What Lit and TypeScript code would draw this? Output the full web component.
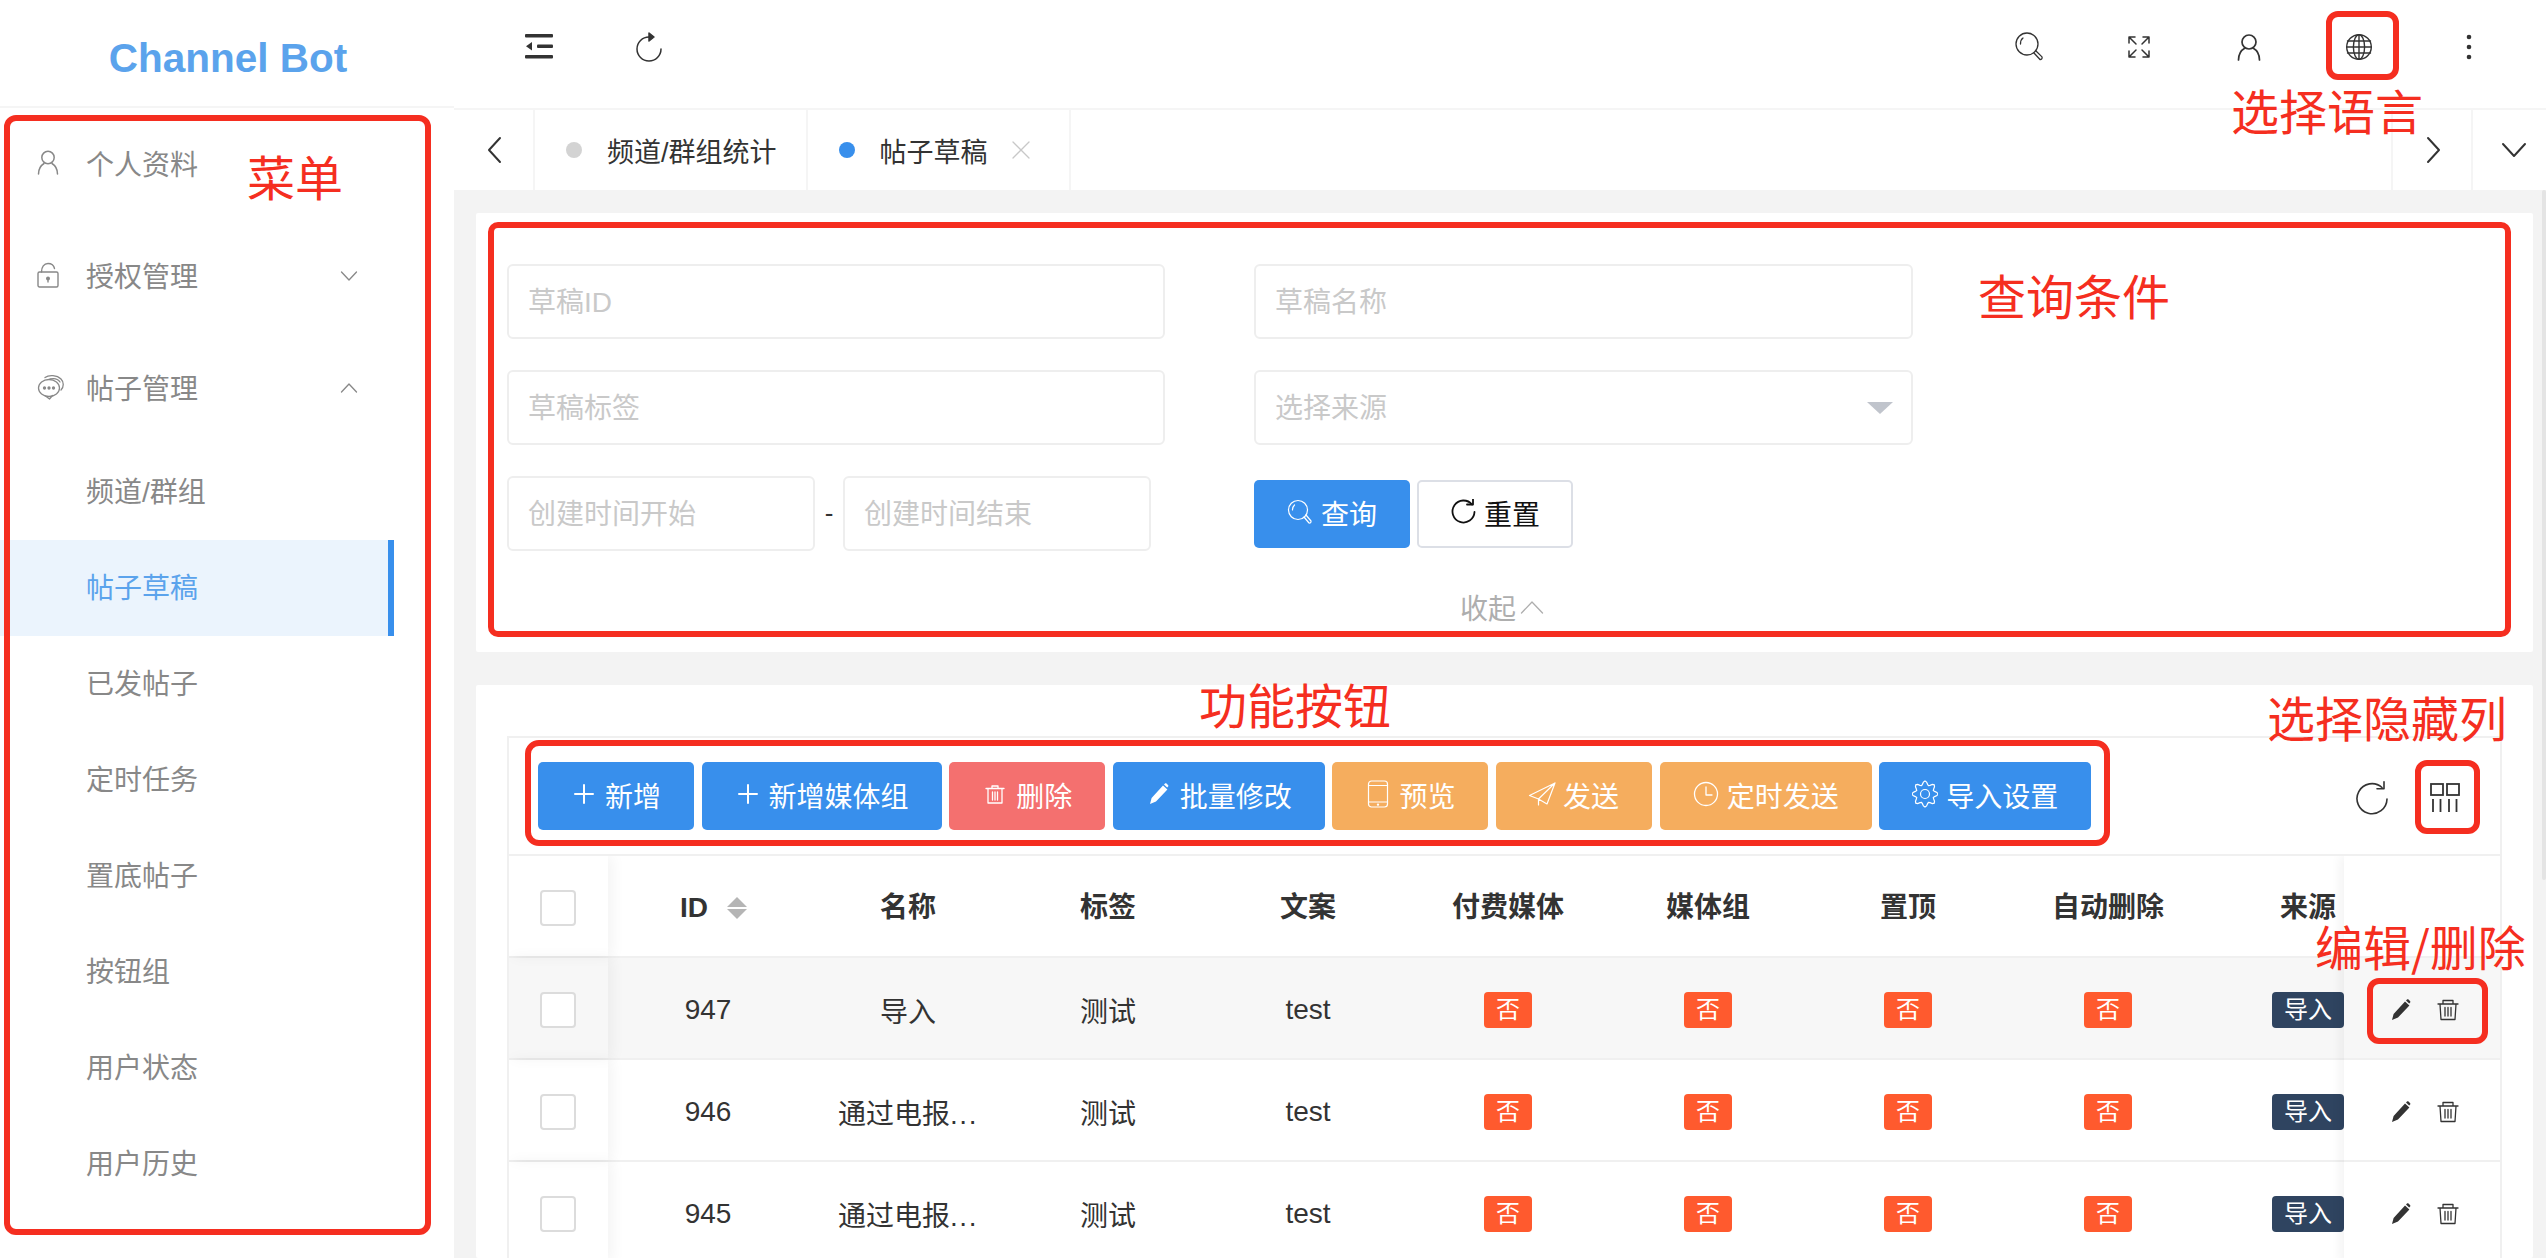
import { LitElement, html, svg, css } from "lit";
import { customElement } from "lit/decorators.js";
import { classMap } from "lit/directives/class-map.js";

// line icons, all drawn with currentColor
const line = (w: number, h: number, body: unknown, sw = 1.6) => html`<svg
  width=${w} height=${h} viewBox="0 0 ${w} ${h}" fill="none" stroke="currentColor"
  stroke-width=${sw} stroke-linecap="round" stroke-linejoin="round">${body}</svg>`;

const gearPath = () => {
  const pts: string[] = [];
  for (let i = 0; i < 48; i++) {
    const a = (i / 48) * Math.PI * 2;
    const r = 11 + 2 * Math.cos(a * 8);
    pts.push(`${(13 + r * Math.cos(a)).toFixed(2)} ${(14 + r * Math.sin(a)).toFixed(2)}`);
  }
  return `M${pts.join("L")}Z`;
};

const icons = {
  indent: html`<svg width="28" height="26" viewBox="0 0 28 26" fill="currentColor">
    <rect width="28" height="3.6" rx="1" /><rect x="12" y="10.5" width="16" height="3.6" rx="1" />
    <polygon points="1,12.3 7,8 7,16.6" /><rect y="21" width="28" height="3.6" rx="1" /></svg>`,
  reload: line(28, 30, svg`<path d="M26 17A12 12 0 1 1 14 5" /><path d="M14 1l5 4-5 4z" fill="currentColor" />`, 1.5),
  search: line(30, 30, svg`<circle cx="13" cy="12" r="11" /><path d="M6.5 12c0-3 1-5 2.5-6" />
    <path d="M20 21l6 6.5a1.9 1.9 0 0 0 2-2.6L22 19" />`, 1.3),
  full: line(24, 24, svg`<path d="M2 8V2h6M2 2l7 7M22 8V2h-6M22 2l-7 7M2 16v6h6M2 22l7-7M22 16v6h-6M22 22l-7-7" />`, 1.5),
  user: line(24, 27, svg`<circle cx="12" cy="8" r="7" /><path d="M1.5 26c0-6 3-10 6.5-12M22.5 26c0-6-3-10-6.5-12" />`, 1.7),
  globe: line(28, 28, svg`<circle cx="14" cy="14" r="12.3" /><ellipse cx="14" cy="14" rx="5.6" ry="12.3" />
    <path d="M14 1.7v24.6M2.5 8h23M1.7 14h24.6M2.5 20h23" />`, 1.4),
  back: line(16, 28, svg`<path d="M14 2L3 14l11 12" />`, 2),
  forward: line(16, 28, svg`<path d="M2 2l11 12L2 26" />`, 2),
  down: line(26, 16, svg`<path d="M2 2l11 12L24 2" />`, 2),
  close: line(18, 18, svg`<path d="M1 1l16 16M17 1L1 17" />`, 1.3),
  menuUser: line(22, 25, svg`<circle cx="11" cy="7.5" r="6.2" /><path d="M1.5 24c0-5 2.5-8.6 5.5-10.5M20.5 24c0-5-2.5-8.6-5.5-10.5" />`, 1.5),
  lock: line(22, 26, svg`<rect x="1" y="10" width="20" height="15" rx="1.5" /><path d="M4.5 10C4.5 5 7 1.5 11 1.5s6 2.5 6.5 5" />
    <circle cx="11" cy="16.5" r="1.3" fill="currentColor" /><path d="M11 17v3" />`, 1.4),
  chat: line(28, 26, svg`<ellipse cx="12" cy="14" rx="10.5" ry="8.5" /><path d="M8.5 22l4 3 3-3.5" />
    <path d="M8 3.5C12 .5 20 1 24 5c3 3 3 8 0 11M13 5c4-1 8 0 10 3" />
    <circle cx="7.5" cy="14" r="1" fill="currentColor" /><circle cx="12" cy="14" r="1" fill="currentColor" /><circle cx="16.5" cy="14" r="1" fill="currentColor" />`, 1.3),
  chevDown: line(18, 12, svg`<path d="M1.5 2L9 10l7.5-8" />`, 1.3),
  chevUp: line(18, 12, svg`<path d="M1.5 10L9 2l7.5 8" />`, 1.3),
  collapseUp: line(24, 14, svg`<path d="M1.5 13L12 2l10.5 11" />`, 1.3),
  plus: line(20, 20, svg`<path d="M10 1v18M1 10h18" />`, 2),
  trash: line(20, 20, svg`<path d="M1 4.5h18M7 4.5V2h6v2.5M3 4.5V19h14V4.5M7.5 8v8M10 8v8M12.5 8v8" />`, 1.3),
  pen: html`<svg width="20" height="22" viewBox="0 0 20 22" fill="currentColor"><path d="M1 21l1.6-6L14 2.5l4.4 4L7 18.5zM15 1.4l1-.8c.6-.4 1.2-.3 1.7.1l1.3 1.2c.5.5.5 1.2.1 1.7l-.9 1z" /></svg>`,
  phone: line(22, 28, svg`<rect x="1.5" y="1" width="19" height="26" rx="3" /><path d="M1.5 5.5h19M1.5 22h19" /><circle cx="11" cy="24.6" r=".6" />`, 1.2),
  send: line(28, 24, svg`<path d="M27 1L1.5 13.5l9 3.5L27 1l-8 21-8.5-5V23" />`, 1.2),
  clock: line(26, 26, svg`<circle cx="13" cy="13" r="11.5" /><path d="M13 6v8h6" />`, 1.3),
  gear: html`<svg width="26" height="28" viewBox="0 0 26 28" fill="none" stroke="currentColor" stroke-width="1.2">
    <path d=${gearPath()} /><circle cx="13" cy="14" r="4.5" /></svg>`,
  glass: line(26, 26, svg`<circle cx="11" cy="11" r="9.5" /><path d="M5.5 11c0-2.5.8-4 2-5" /><path d="M17 18l5 6a1.6 1.6 0 0 0 2-2l-5-6" />`, 1.2),
  reset: line(26, 26, svg`<path d="M22 5.5A11 11 0 1 0 24.5 13" /><path d="M17 5.5h6V0" />`, 1.8),
  tableReload: line(34, 34, svg`<path d="M32 18A15 15 0 1 1 27 6.5" /><path d="M29 .8v7h-7" />`, 1.6),
  columns: html`<svg width="30" height="30" viewBox="0 0 30 30" fill="none" stroke="currentColor" stroke-width="1.8">
    <rect x="1" y="1" width="12" height="11" /><rect x="17" y="1" width="12" height="11" />
    <path d="M3 16v13M10.5 16v13M19 16v13M26.5 16v13" /></svg>`,
  rowTrash: line(22, 22, svg`<path d="M1 5h20M6 5V1.5h10V5M3 5l1 15.5h14L19 5M8 8.5V17M11 8.5V17M14 8.5V17" />`, 1.3),
};

const menuSub = ["频道/群组", "帖子草稿", "已发帖子", "定时任务", "置底帖子", "按钮组", "用户状态", "用户历史"];

const toolButtons = [
  { label: "新增", icon: icons.plus, kind: "blue" },
  { label: "新增媒体组", icon: icons.plus, kind: "blue" },
  { label: "删除", icon: icons.trash, kind: "red" },
  { label: "批量修改", icon: icons.pen, kind: "blue" },
  { label: "预览", icon: icons.phone, kind: "orange" },
  { label: "发送", icon: icons.send, kind: "orange" },
  { label: "定时发送", icon: icons.clock, kind: "orange" },
  { label: "导入设置", icon: icons.gear, kind: "blue" },
];

const headers = ["名称", "标签", "文案", "付费媒体", "媒体组", "置顶", "自动删除", "来源"];

const rows = [
  { id: 947, name: "导入", cut: false, hover: true },
  { id: 946, name: "通过电报", cut: true, hover: false },
  { id: 945, name: "通过电报", cut: true, hover: false },
];

@customElement("app-root")
export class AppRoot extends LitElement {
  static styles = css`
    :host {
      display: block;
      position: relative;
      width: 2546px;
      height: 1258px;
      overflow: hidden;
      background: #fff;
      color: #333;
      font-family: "Liberation Sans", "Noto Sans CJK SC", sans-serif;
      font-size: 28px;
    }
    * { box-sizing: border-box; }
    svg { display: block; flex: none; }
    .layout { display: flex; height: 100%; }

    /* sidebar */
    .side { width: 454px; flex: none; background: #fff; }
    .logo {
      height: 108px;
      padding: 11px 0 0 2px;
      display: flex;
      align-items: center;
      justify-content: center;
      border-bottom: 2px solid #f5f5f5;
      font-size: 40.5px;
      font-weight: 700;
      color: #5ba3ec;
    }
    .menu { display: flex; flex-direction: column; color: #888; }
    .menu-row { height: 112px; display: flex; align-items: center; padding-left: 37px; padding-bottom: 3px; }
    .menu-icon { width: 49px; display: flex; }
    .chev { margin-left: 142px; padding-top: 3px; }
    .sub {
      height: 96px;
      width: 394px;
      display: flex;
      align-items: center;
      padding: 0 0 5px 86px;
    }
    .sub.active { background: #ebf4fd; color: #5ba3ec; border-right: 6px solid #388fec; }

    /* top */
    .main { flex: 1; min-width: 0; display: flex; flex-direction: column; background: #f3f3f3; }
    .topbar {
      height: 110px;
      flex: none;
      display: flex;
      align-items: flex-start;
      justify-content: space-between;
      padding: 0 22px 0 30px;
      background: #fff;
      border-bottom: 2px solid #f5f5f5;
      color: #333;
    }
    .tb-group { display: flex; }
    .tb-btn { width: 110px; height: 94px; display: flex; align-items: center; justify-content: center; }
    .tabs { height: 80px; flex: none; display: flex; background: #fff; color: #333; font-size: 27px; }
    .tab-nav { display: flex; align-items: center; justify-content: center; border-right: 2px solid #f5f5f5; }
    .tab-nav.prev { width: 81px; }
    .tab { display: flex; align-items: center; padding: 0 29px 0 31px; border-right: 2px solid #f5f5f5; }
    .dot { width: 16px; height: 16px; border-radius: 50%; background: #d3d3d3; margin-right: 25px; }
    .dot.on { background: #388fec; }
    .tab-close { margin: 0 10px 0 24px; color: #c8c8c8; }
    .tab-fill { flex: 1; border-right: 2px solid #f5f5f5; }
    .tab-nav.next { width: 80px; padding-left: 4px; }
    .tab-nav.more { width: 73px; border-right: 0; padding-left: 8px; }

    /* cards */
    .content { flex: 1; min-height: 0; display: flex; flex-direction: column; gap: 33px; padding: 23px 13px 0 22px; }
    .card { background: #fff; padding: 51px 31px 0; border-radius: 2px; }
    .query { height: 439px; flex: none; }
    .form { display: grid; grid-template-columns: 658px 659px; column-gap: 89px; row-gap: 31px; }
    .input {
      height: 75px;
      width: 100%;
      border: 2px solid #eeeeee;
      border-radius: 6px;
      padding: 2px 18px 0 19px;
      font: inherit;
      color: #333;
      background: #fff;
      outline: none;
    }
    .input::placeholder { color: #c9c9c9; opacity: 1; }
    .select { position: relative; }
    .select svg { position: absolute; right: 20px; top: 32px; color: #c0c4cc; }
    .dates { display: flex; align-items: center; }
    .dates .input { width: 308px; }
    .dash { width: 28px; text-align: center; color: #333; font-size: 26px; }
    .actions { display: flex; align-items: center; gap: 7px; }
    .collapse {
      margin-top: 36px;
      padding-right: 5px;
      display: flex;
      align-items: center;
      justify-content: center;
      gap: 4px;
      color: #aeaeae;
    }
    .btn {
      height: 68px;
      padding: 0 33px 2px 0;
      display: inline-flex;
      align-items: center;
      border-radius: 5px;
      color: #fff;
      white-space: nowrap;
    }
    .ico { width: 28px; margin: 0 7px 2px 32px; display: flex; justify-content: center; }
    .btn.blue { background: #388fec; }
    .btn.red { background: #f4706f; }
    .btn.orange { background: #f5ad5e; }
    .btn.plain { background: #fff; color: #111; border: 2px solid #dcdfe6; padding-right: 31px; }
    .btn.plain .ico { margin-left: 30px; }

    .list { flex: 1; min-height: 0; }
    .box { border: solid #f0f0f0; border-width: 2px 2px 0; height: 100%; }
    .toolbar {
      height: 118px;
      display: flex;
      align-items: flex-start;
      justify-content: space-between;
      padding: 24px 40px 0 29px;
      border-bottom: 2px solid #f0f0f0;
    }
    .tool-left { display: flex; gap: 7.6px; }
    .tool-right { display: flex; align-items: center; gap: 41px; height: 72px; color: #333; }

    /* table */
    .table { position: relative; overflow: hidden; height: 420px; }
    .tr {
      height: 102px;
      padding-top: 4px;
      display: grid;
      grid-template-columns: 99px 200px repeat(8, 200px);
      border-bottom: 2px solid #f0f0f0;
      align-items: center;
      text-align: center;
      white-space: nowrap;
    }
    .tr.hover { background: #f7f7f7; }
    .th { font-weight: 600; color: #333; line-height: 34px; }
    .th-id { display: flex; align-items: center; justify-content: center; gap: 19px; padding-left: 11px; }
    .sort { display: flex; flex-direction: column; gap: 2px; color: #b5b5b5; }
    .more { letter-spacing: 1.5px; }
    .check-cell {
      height: 100px;
      margin-top: -4px;
      display: flex;
      align-items: center;
      justify-content: center;
      padding: 4px 2px 0 0;
      position: relative;
      box-shadow: 4px 0 14px rgba(0, 0, 0, 0.05);
    }
    .check { width: 36px; height: 36px; border: 2px solid #dcdcdc; border-radius: 4px; background: #fff; }
    .tag {
      display: inline-block;
      height: 36px;
      line-height: 35px;
      padding: 0 12px;
      border-radius: 4px;
      font-size: 24px;
      color: #fff;
    }
    .tag.no { background: #ff5a2e; }
    .tag.src { background: #2f4460; }
    .fixed {
      position: absolute;
      right: 0;
      top: 0;
      width: 156px;
      background: #fff;
      box-shadow: -4px 0 10px rgba(0, 0, 0, 0.05);
    }
    .fixed-cell {
      height: 102px;
      padding-top: 4px;
      display: flex;
      align-items: center;
      justify-content: flex-start;
      gap: 26px;
      padding-left: 47px;
      border-bottom: 2px solid #f0f0f0;
      color: #333;
    }
    .fixed-cell.hover { background: #f7f7f7; }

    /* red notes over the shot */
    .mark { position: absolute; border: 6px solid #f52e20; pointer-events: none; }
    .note { position: absolute; color: #f52e20; font-size: 48px; line-height: 40px; white-space: nowrap; font-family: "Noto Sans CJK SC", sans-serif; }
    .m-menu { left: 4px; top: 115px; width: 427px; height: 1120px; border-radius: 12px; }
    .m-lang { left: 2326px; top: 11px; width: 73px; height: 69px; border-radius: 12px; }
    .m-query { left: 488px; top: 222px; width: 2023px; height: 415px; border-radius: 10px; }
    .m-tool { left: 525px; top: 740px; width: 1585px; height: 106px; border-radius: 14px; }
    .m-cols { left: 2415px; top: 760px; width: 65px; height: 74px; border-radius: 12px; }
    .m-edit { left: 2367px; top: 978px; width: 121px; height: 66px; border-radius: 12px; }
    .n-menu { left: 247px; top: 155px; }
    .n-lang { left: 2231px; top: 89px; }
    .n-query { left: 1978px; top: 274px; }
    .n-tool { left: 1199px; top: 683px; }
    .n-cols { left: 2267px; top: 696px; }
    .n-edit { left: 2315px; top: 925px; }
    .scroll { position: absolute; right: 0; top: 190px; width: 4px; height: 690px; border-radius: 3px; background: #e4e4e4; }
  `;

  private renderTopbar() {
    return html`<div class="topbar">
      <div class="tb-group">
        <div class="tb-btn">${icons.indent}</div>
        <div class="tb-btn">${icons.reload}</div>
      </div>
      <div class="tb-group">
        <div class="tb-btn">${icons.search}</div>
        <div class="tb-btn">${icons.full}</div>
        <div class="tb-btn">${icons.user}</div>
        <div class="tb-btn">${icons.globe}</div>
        <div class="tb-btn">
          <svg width="6" height="26" viewBox="0 0 6 26" fill="currentColor">
            <circle cx="3" cy="3" r="2.3" /><circle cx="3" cy="13" r="2.3" /><circle cx="3" cy="23" r="2.3" />
          </svg>
        </div>
      </div>
    </div>`;
  }

  private renderTabs() {
    return html`<div class="tabs">
      <div class="tab-nav prev">${icons.back}</div>
      <div class="tab"><span class="dot"></span>频道/群组统计</div>
      <div class="tab"><span class="dot on"></span>帖子草稿<span class="tab-close">${icons.close}</span></div>
      <div class="tab-fill"></div>
      <div class="tab-nav next">${icons.forward}</div>
      <div class="tab-nav more">${icons.down}</div>
    </div>`;
  }

  private renderQuery() {
    return html`<div class="card query">
      <div class="form">
        <input class="input" placeholder="草稿ID" />
        <input class="input" placeholder="草稿名称" />
        <input class="input" placeholder="草稿标签" />
        <div class="select">
          <input class="input" placeholder="选择来源" />
          <svg width="26" height="12" viewBox="0 0 26 12" fill="currentColor"><polygon points="0,0 26,0 13,12" /></svg>
        </div>
        <div class="dates">
          <input class="input" placeholder="创建时间开始" />
          <span class="dash">-</span>
          <input class="input" placeholder="创建时间结束" />
        </div>
        <div class="actions">
          <div class="btn blue"><span class="ico">${icons.glass}</span>查询</div>
          <div class="btn plain"><span class="ico">${icons.reset}</span>重置</div>
        </div>
      </div>
      <div class="collapse">收起${icons.collapseUp}</div>
    </div>`;
  }

  private renderTable() {
    return html`<div class="table">
      <div class="tr th">
        <div class="check-cell"><span class="check"></span></div>
        <div class="th-id">
          ID
          <span class="sort">
            <svg width="20" height="10" viewBox="0 0 20 10" fill="currentColor"><polygon points="10,0 20,10 0,10" /></svg>
            <svg width="20" height="10" viewBox="0 0 20 10" fill="currentColor"><polygon points="0,0 20,0 10,10" /></svg>
          </span>
        </div>
        ${headers.map((h) => html`<div>${h}</div>`)}
      </div>
      ${rows.map(
        (r) => html`<div class="tr ${classMap({ hover: r.hover })}">
          <div class="check-cell"><span class="check"></span></div>
          <div>${r.id}</div>
          <div>${r.name}${r.cut ? html`<span class="more">...</span>` : ""}</div>
          <div>测试</div>
          <div>test</div>
          ${[0, 1, 2, 3].map(() => html`<div><span class="tag no">否</span></div>`)}
          <div><span class="tag src">导入</span></div>
        </div>`
      )}
      <div class="fixed">
        <div class="fixed-cell"></div>
        ${rows.map(
          (r) => html`<div class="fixed-cell ${classMap({ hover: r.hover })}">${icons.pen}${icons.rowTrash}</div>`
        )}
      </div>
    </div>`;
  }

  render() {
    return html`<div class="layout">
        <aside class="side">
          <div class="logo">Channel Bot</div>
          <nav class="menu">
            <div class="menu-row"><span class="menu-icon">${icons.menuUser}</span>个人资料</div>
            <div class="menu-row"><span class="menu-icon">${icons.lock}</span>授权管理<span class="chev">${icons.chevDown}</span></div>
            <div class="menu-row"><span class="menu-icon">${icons.chat}</span>帖子管理<span class="chev">${icons.chevUp}</span></div>
            ${menuSub.map((m) => html`<div class="sub ${classMap({ active: m === "帖子草稿" })}">${m}</div>`)}
          </nav>
        </aside>
        <div class="main">
          ${this.renderTopbar()} ${this.renderTabs()}
          <div class="content">
            ${this.renderQuery()}
            <div class="card list">
              <div class="box">
                <div class="toolbar">
                  <div class="tool-left">
                    ${toolButtons.map((b) => html`<div class="btn ${b.kind}"><span class="ico">${b.icon}</span>${b.label}</div>`)}
                  </div>
                  <div class="tool-right">${icons.tableReload}${icons.columns}</div>
                </div>
                ${this.renderTable()}
              </div>
            </div>
          </div>
        </div>
      </div>
      <div class="scroll"></div>
      <div class="mark m-menu"></div>
      <div class="mark m-lang"></div>
      <div class="mark m-query"></div>
      <div class="mark m-tool"></div>
      <div class="mark m-cols"></div>
      <div class="mark m-edit"></div>
      <div class="note n-menu">菜单</div>
      <div class="note n-lang">选择语言</div>
      <div class="note n-query">查询条件</div>
      <div class="note n-tool">功能按钮</div>
      <div class="note n-cols">选择隐藏列</div>
      <div class="note n-edit">编辑/删除</div>`;
  }
}
